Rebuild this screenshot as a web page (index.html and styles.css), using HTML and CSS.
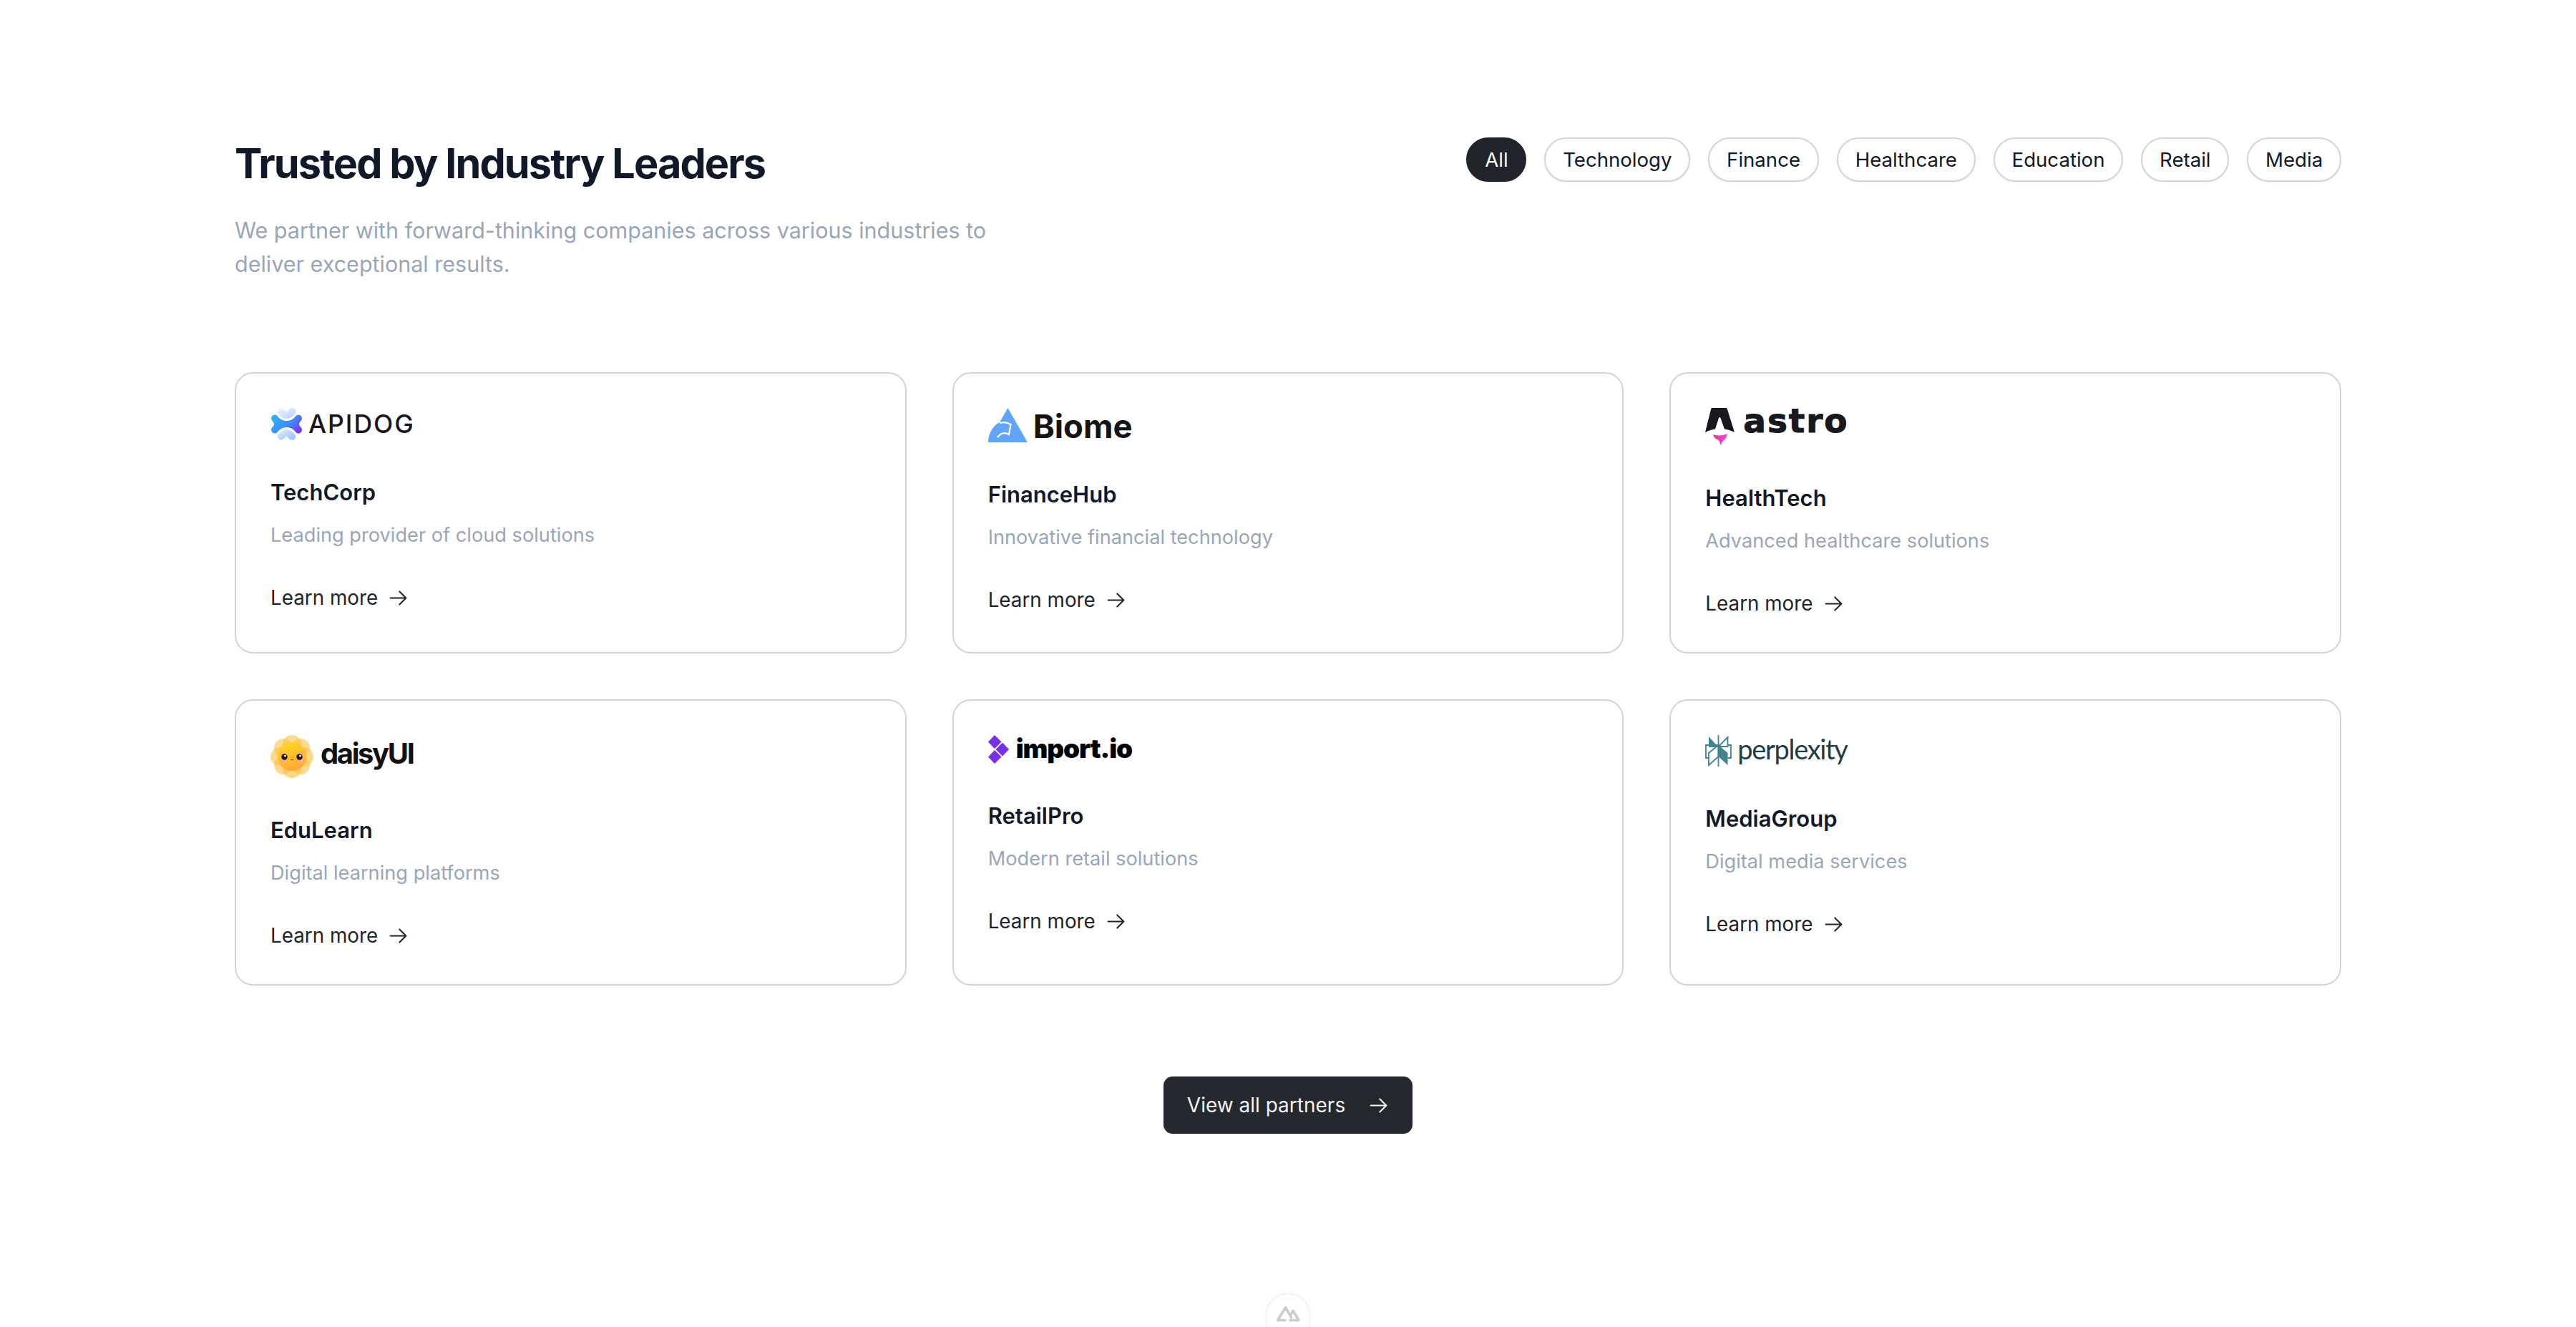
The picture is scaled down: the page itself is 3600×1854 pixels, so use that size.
FILE: index.html
```html
<!DOCTYPE html>
<html lang="en">
<head>
    <meta charset="UTF-8">
    <meta name="viewport" content="width=device-width, initial-scale=1.0">
    <title>Trusted by Industry Leaders</title>
    <link rel="stylesheet" href="styles.css">
</head>
<body>
    <svg class="sprite" width="0" height="0" aria-hidden="true">
        <symbol id="arrow" viewBox="0 0 24 24">
            <path d="M3 12h18M13.500 4.500 21 12l-7.500 7.500" fill="none" stroke="currentColor" stroke-width="1.700" stroke-linecap="round" stroke-linejoin="round"/>
        </symbol>
    </svg>

    <main class="partners">
        <header class="partners-head">
            <div class="partners-intro">
                <h2>Trusted by Industry Leaders</h2>
                <p>We partner with forward-thinking companies across various industries to deliver exceptional results.</p>
            </div>
            <div class="filters">
                <button type="button" class="pill active">All</button>
                <button type="button" class="pill">Technology</button>
                <button type="button" class="pill">Finance</button>
                <button type="button" class="pill">Healthcare</button>
                <button type="button" class="pill">Education</button>
                <button type="button" class="pill">Retail</button>
                <button type="button" class="pill">Media</button>
            </div>
        </header>

        <section class="partner-grid">
            <article class="card">
                <div class="logo logo-apidog">
                    <svg class="logo-icon" width="45" height="45" viewBox="0 0 45 45">
                        <defs>
                            <linearGradient id="apiBone" x1="0" y1="0.2" x2="1" y2="0.8">
                                <stop offset="0" stop-color="#27b4ff"/>
                                <stop offset="0.55" stop-color="#3f8cfb"/>
                                <stop offset="1" stop-color="#7a2ff0"/>
                            </linearGradient>
                            <linearGradient id="apiTop" x1="0" y1="0" x2="1" y2="1">
                                <stop offset="0" stop-color="#f3f7ff"/>
                                <stop offset="1" stop-color="#b4cffc"/>
                            </linearGradient>
                            <linearGradient id="apiBottom" x1="0" y1="0" x2="1" y2="1">
                                <stop offset="0" stop-color="#e6effe"/>
                                <stop offset="1" stop-color="#93bdfb"/>
                            </linearGradient>
                        </defs>
                        <path d="M3 10.500C5.500 8.500 8.500 9.500 10 11.500 13 15.500 17 18 22.500 18 28 18 32 15.500 35 11.500 36.500 9.500 39.500 8.500 42 10.500 44.500 12.500 44.500 16 42.500 18 41 19.500 40 21 40 22.500 40 24 41 25.500 42.500 27 44.500 29 44.500 32.500 42 34.500 39.500 36.500 36.500 35.500 35 33.500 32 29.500 28 27 22.500 27 17 27 13 29.500 10 33.500 8.500 35.500 5.500 36.500 3 34.500 .5 32.500 .5 29 2.500 27 4 25.500 5 24 5 22.500 5 21 4 19.500 2.500 18 .5 16 .5 12.500 3 10.500Z" fill="url(#apiBone)"/>
                        <path d="M11.500 1.500C14 -.5 17 .5 19 2.500L22.500 5.500 26.500 1.500C29 -.5 32 -.5 34 1.500 36 3.500 35.500 7 33.500 9 30.500 12.500 27 15 22.500 15 18 15 14.500 12.500 11 8.500 9 6.500 9.500 3.500 11.500 1.500Z" fill="url(#apiTop)"/>
                        <path d="M22.500 30C27 30 30.500 32.500 33.500 36 35.500 38 36 41.500 34 43.500 32 45.500 29 45 26.500 43.500L22.500 39.500 19 42.500C17 44.500 14 45.500 11.500 43.500 9.500 41.500 9 38.500 11 36.500 14.500 32.500 18 30 22.500 30Z" fill="url(#apiBottom)"/>
                    </svg>
                    <span class="logo-text">APIDOG</span>
                </div>
                <h3>TechCorp</h3>
                <p>Leading provider of cloud solutions</p>
                <a class="learn" href="#">Learn more <svg class="arrow"><use href="#arrow"/></svg></a>
            </article>

            <article class="card">
                <div class="logo logo-biome">
                    <svg class="logo-icon" width="55" height="48" viewBox="0 0 55 48">
                        <path d="M27.500 0 55 48H0C0 36 7 24 16 20Z" fill="#60a5fa"/>
                        <path d="M16 21C21 19.500 27 20 31.500 23L29 37C24 34 18 34.500 13 41" fill="none" stroke="#fff" stroke-width="2.200"/>
                    </svg>
                    <span class="logo-text">Biome</span>
                </div>
                <h3>FinanceHub</h3>
                <p>Innovative financial technology</p>
                <a class="learn" href="#">Learn more <svg class="arrow"><use href="#arrow"/></svg></a>
            </article>

            <article class="card">
                <div class="logo logo-astro">
                    <svg class="logo-icon" width="41" height="53" viewBox="0 0 41 53">
                        <defs>
                            <linearGradient id="astroFlame" x1="0" y1="0.5" x2="1" y2="0.4">
                                <stop offset="0" stop-color="#df3f85"/>
                                <stop offset="1" stop-color="#f041e0"/>
                            </linearGradient>
                        </defs>
                        <path d="M10 0H29C30 0 30.500 .5 31 2L41 34C36 31.500 31 30 27 29.500L21.500 14C21 12.500 19.500 12.500 19 14L14 29.500C10 30 5 31.500 0 34L8 2C8.500 .5 9 0 10 0Z" fill="#17191e"/>
                        <path d="M11 37C16 39 25 39 31 36 30 41 28 44 26 45 24 46 23 48 22 52 20 48 20 45 17 44 14 43 12 41 11 37Z" fill="url(#astroFlame)"/>
                    </svg>
                    <span class="logo-text">astro</span>
                </div>
                <h3>HealthTech</h3>
                <p>Advanced healthcare solutions</p>
                <a class="learn" href="#">Learn more <svg class="arrow"><use href="#arrow"/></svg></a>
            </article>

            <article class="card">
                <div class="logo logo-daisy">
                    <svg class="logo-icon" width="60" height="60" viewBox="0 0 60 60">
                        <defs>
                            <linearGradient id="daisyFace" x1="0.3" y1="0" x2="0.7" y2="1">
                                <stop offset="0" stop-color="#ffd51e"/>
                                <stop offset="1" stop-color="#ffa63d"/>
                            </linearGradient>
                        </defs>
                        <g fill="#ffc13f" fill-opacity="0.6">
                            <circle cx="30" cy="13" r="13"/>
                            <circle cx="42" cy="18" r="13"/>
                            <circle cx="47" cy="30" r="13"/>
                            <circle cx="42" cy="42" r="13"/>
                            <circle cx="30" cy="47" r="13"/>
                            <circle cx="18" cy="42" r="13"/>
                            <circle cx="13" cy="30" r="13"/>
                            <circle cx="18" cy="18" r="13"/>
                        </g>
                        <circle cx="30" cy="30" r="20" fill="url(#daisyFace)"/>
                        <ellipse cx="18" cy="27" rx="4" ry="2.500" fill="#f7a99c"/>
                        <ellipse cx="42" cy="27" rx="4" ry="2.500" fill="#f7a99c"/>
                        <ellipse cx="18" cy="36" rx="4" ry="2.500" fill="#f7a99c"/>
                        <ellipse cx="42" cy="36" rx="4" ry="2.500" fill="#f7a99c"/>
                        <circle cx="19.500" cy="30.500" r="4.200" fill="#1b1512"/>
                        <circle cx="40.500" cy="30.500" r="4.200" fill="#1b1512"/>
                        <circle cx="20.500" cy="29" r="1.500" fill="#fff"/>
                        <circle cx="41.500" cy="29" r="1.500" fill="#fff"/>
                        <path d="M28.500 34.500h3" stroke="#6b4a1c" stroke-width="1" stroke-linecap="round"/>
                    </svg>
                    <span class="logo-text">daisyUI</span>
                </div>
                <h3>EduLearn</h3>
                <p>Digital learning platforms</p>
                <a class="learn" href="#">Learn more <svg class="arrow"><use href="#arrow"/></svg></a>
            </article>

            <article class="card">
                <div class="logo logo-import">
                    <svg class="logo-icon" width="29" height="40" viewBox="0 0 29 40">
                        <g fill="#7730e6">
                            <path d="M9 0 18.500 9.500 9 19 0 9.500Z"/>
                            <path d="M20 10.500 29 20 20 29.500 10.500 20Z"/>
                            <path d="M9 21 18.500 30.500 9 40 0 30.500Z"/>
                        </g>
                    </svg>
                    <span class="logo-text">import.io</span>
                </div>
                <h3>RetailPro</h3>
                <p>Modern retail solutions</p>
                <a class="learn" href="#">Learn more <svg class="arrow"><use href="#arrow"/></svg></a>
            </article>

            <article class="card">
                <div class="logo logo-perplexity">
                    <svg class="logo-icon" width="37" height="44" viewBox="0 0 37 44">
                        <g fill="none" stroke="#418490" stroke-width="1.800">
                            <path d="M18.500 0V44"/>
                            <path d="M31.500 3 18.500 16H31.500Z"/>
                            <path d="M18.500 14H1V32H5"/>
                            <path d="M31.500 14H36V32H31.500"/>
                            <path d="M5 25 18.500 14V30L5 42Z"/>
                        </g>
                        <path d="M5 2 18.500 17H5Z" fill="#418490"/>
                        <path d="M18.500 14 31.500 25V42L18.500 30Z" fill="#418490"/>
                    </svg>
                    <span class="logo-text">perplexity</span>
                </div>
                <h3>MediaGroup</h3>
                <p>Digital media services</p>
                <a class="learn" href="#">Learn more <svg class="arrow"><use href="#arrow"/></svg></a>
            </article>
        </section>

        <div class="view-all-wrap">
            <a class="view-all" href="#">View all partners <svg class="arrow"><use href="#arrow"/></svg></a>
        </div>
    </main>

    <div class="dev-badge">
        <svg width="36" height="24" viewBox="0 0 36 24">
            <path d="M14 21.500H3.500L14.500 4 22.500 17.500M21 21.500H33L25 8.500 21.500 14" fill="none" stroke="#cccccc" stroke-width="3.600" stroke-linecap="round" stroke-linejoin="round"/>
        </svg>
    </div>
</body>
</html>
```

FILE: styles.css
```css
* {
    box-sizing: border-box;
}
body {
    font-family: Inter, "Liberation Sans", sans-serif;
    margin: 0;
    padding: 0;
    background-color: #fff;
    color: #111827;
    overflow: hidden;
}
.sprite {
    position: absolute;
}
.partners {
    width: 2944px;
    margin: 0 auto;
    padding-top: 192px;
}
.partners-head {
    display: flex;
    justify-content: space-between;
    align-items: flex-start;
}
.partners-intro {
    width: 1100px;
}
.partners-intro h2 {
    margin: 0 0 33.5px;
    font-size: 57.6px;
    line-height: 72px;
    font-weight: 700;
    letter-spacing: -0.033em;
    color: #111827;
}
.partners-intro p {
    margin: 0;
    font-size: 30.5px;
    line-height: 47px;
    color: #9aa6b6;
}
.filters {
    display: flex;
    gap: 25px;
}
.pill {
    padding: 12.8px 23.8px;
    border: 2px solid #d1d5db;
    border-radius: 999px;
    background: #fff;
    color: #111827;
    font-family: inherit;
    font-size: 27.6px;
    line-height: 32px;
    font-weight: 400;
    box-shadow: 0 1.6px 3.2px rgba(0, 0, 0, 0.05);
    cursor: pointer;
}
.pill.active {
    background: #212529;
    border-color: #212529;
    color: #fff;
}
.partner-grid {
    display: grid;
    grid-template-columns: repeat(3, 1fr);
    gap: 64px;
    margin-top: 128.5px;
}
.card {
    padding: 48px 48px 49.5px;
    border: 2px solid #d1d5db;
    border-radius: 25.6px;
    background: #fff;
}
.card h3 {
    margin: 51px 0 0;
    font-size: 31px;
    line-height: 44.8px;
    font-weight: 600;
    color: #111827;
}
.card p {
    margin: 17px 0 0;
    font-size: 27.2px;
    line-height: 40px;
    color: #9aa6b6;
}
.logo {
    display: flex;
    align-items: center;
}
.logo-icon {
    flex: none;
}
.logo-apidog {
    height: 45px;
    gap: 8px;
}
.logo-apidog .logo-text {
    font-size: 35.5px;
    font-weight: 500;
    letter-spacing: 0.055em;
    color: #17151f;
}
.logo-biome {
    height: 48px;
    gap: 8px;
}
.logo-biome .logo-text {
    padding-top: 2px;
    font-size: 45.5px;
    font-weight: 700;
    color: #141414;
}
.logo-astro {
    height: 53px;
    gap: 12px;
    align-items: flex-start;
}
.logo-astro .logo-text {
    font-family: "DejaVu Sans", sans-serif;
    font-size: 47px;
    line-height: 35px;
    font-weight: 700;
    letter-spacing: 0.04em;
    -webkit-text-stroke: 1px #17191e;
    color: #17191e;
}
.logo-daisy {
    height: 60px;
    gap: 10px;
}
.logo-daisy .logo-text {
    padding-bottom: 8px;
    font-size: 40px;
    font-weight: 700;
    letter-spacing: -0.06em;
    color: #111;
}
.logo-import {
    height: 40px;
    gap: 10px;
}
.logo-import .logo-text {
    padding-bottom: 2px;
    font-size: 37px;
    font-weight: 900;
    letter-spacing: -0.03em;
    color: #000;
}
.logo-perplexity {
    height: 44px;
    gap: 8px;
}
.logo-perplexity .logo-text {
    padding-bottom: 6px;
    font-family: Lato, sans-serif;
    font-size: 38px;
    letter-spacing: -0.035em;
    color: #1f3d45;
}
.learn {
    display: inline-flex;
    align-items: center;
    gap: 14px;
    margin-top: 49.5px;
    font-size: 27.8px;
    line-height: 36px;
    font-weight: 400;
    color: #212529;
    text-decoration: none;
}
.arrow {
    width: 29px;
    height: 29px;
}
.view-all-wrap {
    display: flex;
    justify-content: center;
    margin-top: 127.5px;
}
.view-all {
    display: inline-flex;
    align-items: center;
    gap: 32px;
    height: 80px;
    padding: 0 33px;
    border-radius: 12.8px;
    background: #25282d;
    color: #f3f4f6;
    font-size: 28px;
    font-weight: 400;
    text-decoration: none;
    box-shadow: 0 1.6px 3.2px rgba(0, 0, 0, 0.05);
}
.dev-badge {
    position: fixed;
    left: 1769px;
    bottom: 0;
    width: 62px;
    height: 47px;
    padding-top: 15px;
    display: flex;
    justify-content: center;
    border: 1.6px solid #ececec;
    border-bottom: none;
    border-radius: 31px 31px 0 0;
    background: #fff;
    box-shadow: 0 -2px 10px rgba(0, 0, 0, 0.03);
}
```
